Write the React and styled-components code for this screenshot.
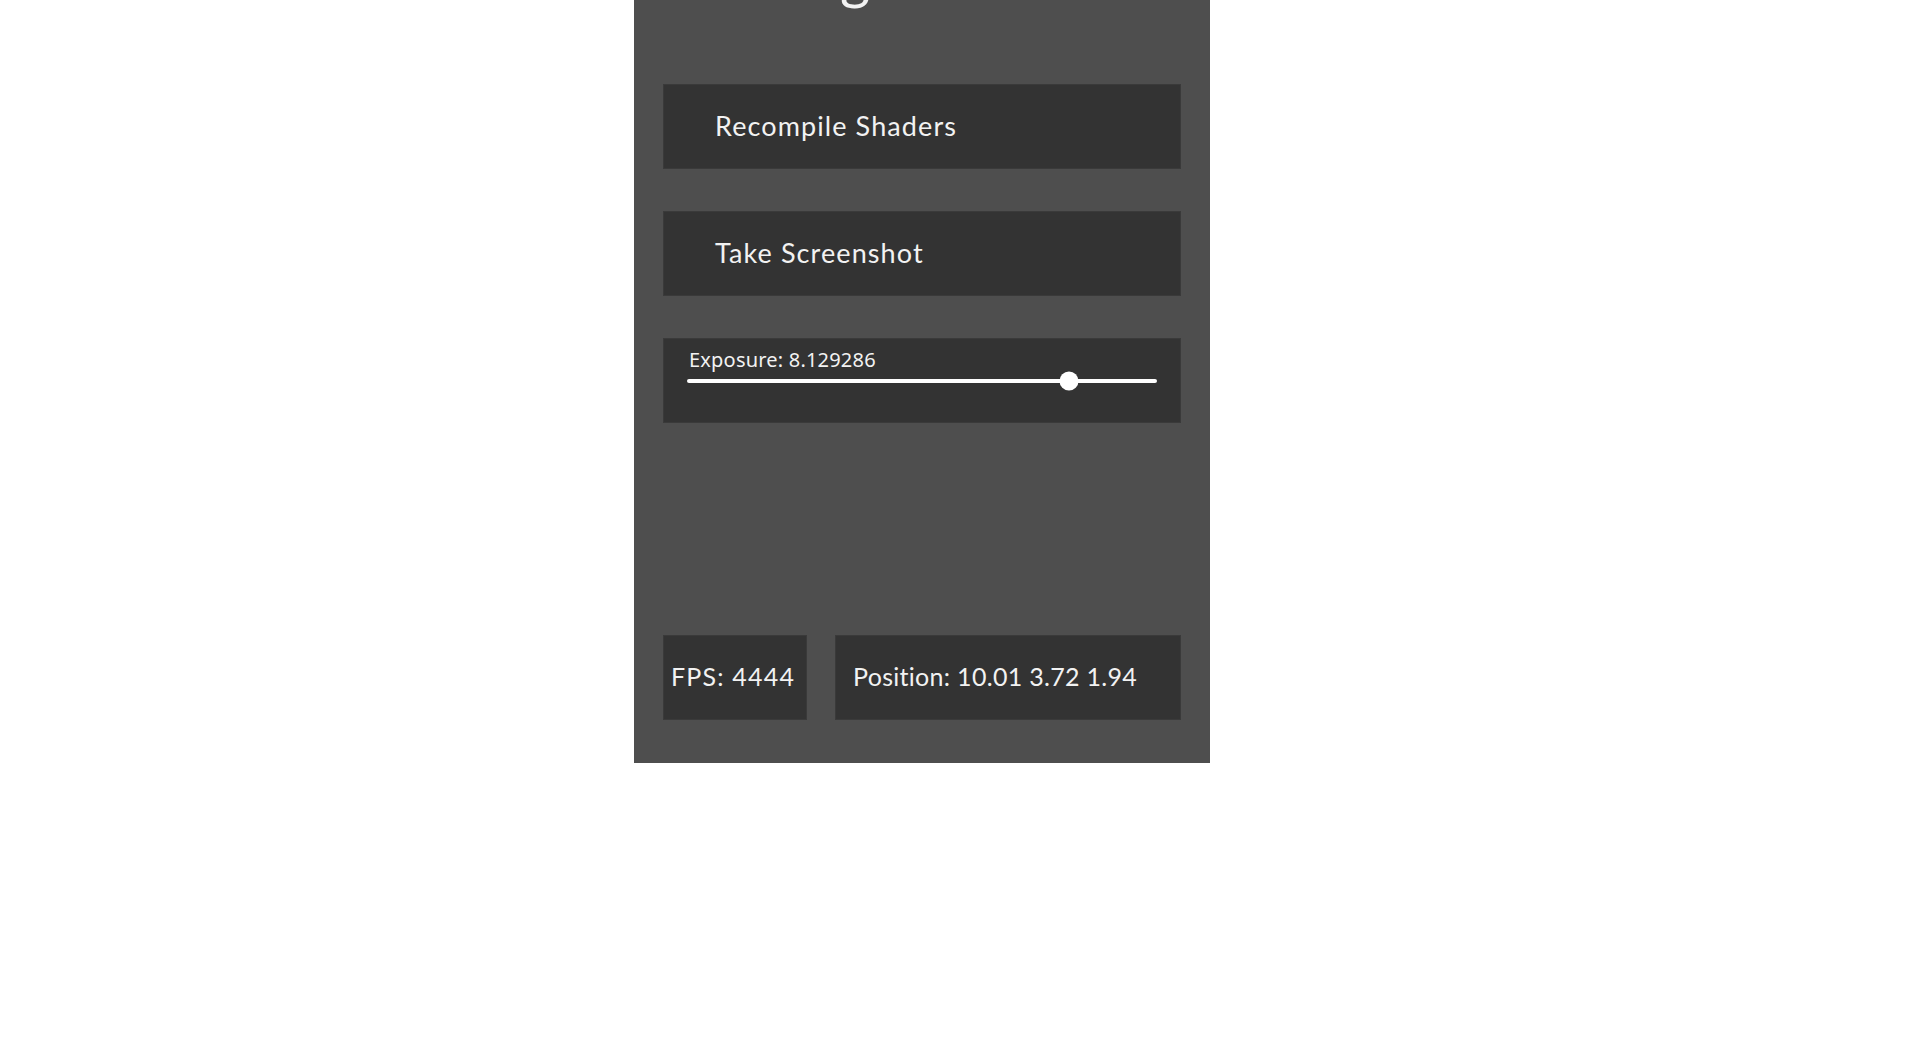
import React from "react";
import styled, { createGlobalStyle } from "styled-components";

const GlobalStyle = createGlobalStyle`
  html, body {
    margin: 0;
    padding: 0;
    background: #ffffff;
    font-family: Lato, "Noto Sans", sans-serif;
  }
`;

const Panel = styled.div`
  display: flex;
  flex-direction: column;
  box-sizing: border-box;
  width: 576px;
  height: 815px;
  margin: -52px 0 0 634px;
  padding: 0 29px 43px;
  background: #4e4e4e;
  color: #f2f2f2;
`;

const Title = styled.h1`
  margin: 0 0 80px 29px;
  font-size: 58px;
  line-height: 56px;
  font-weight: 400;
`;

const Button = styled.button`
  display: flex;
  align-items: center;
  box-sizing: border-box;
  height: 85px;
  margin-bottom: 42px;
  padding: 0 0 3px 51px;
  border: 1px solid #3a3a3a;
  background: #333333;
  color: #f2f2f2;
  font-family: Lato, "Noto Sans", sans-serif;
  font-size: 27px;
  letter-spacing: 1.1px;
  text-align: left;
  cursor: pointer;
`;

const SliderBox = styled.div`
  box-sizing: border-box;
  height: 85px;
  padding: 8px 23px 0;
  border: 1px solid #3a3a3a;
  background: #333333;
`;

const SliderLabel = styled.div`
  padding-left: 2px;
  font-family: "Noto Sans", sans-serif;
  font-size: 20px;
  line-height: 26px;
  letter-spacing: 0.2px;
`;

const Track = styled.div`
  position: relative;
  height: 4px;
  margin-top: 6px;
  border-radius: 2px;
  background: #ffffff;
`;

const Knob = styled.div`
  position: absolute;
  top: 50%;
  width: 19px;
  height: 19px;
  border-radius: 50%;
  background: #ffffff;
  transform: translate(-50%, -50%);
`;

const StatusRow = styled.div`
  display: flex;
  gap: 28px;
  margin-top: auto;
`;

const StatusBox = styled.div`
  display: flex;
  align-items: center;
  box-sizing: border-box;
  height: 85px;
  width: ${({ w }) => w}px;
  padding: 0 0 3px ${({ pad }) => pad}px;
  border: 1px solid #3a3a3a;
  background: #333333;
  font-size: 25px;
  letter-spacing: ${({ spacing }) => spacing}px;
  white-space: nowrap;
`;

const Slider = ({ label, value, min, max }) => (
  <SliderBox>
    <SliderLabel>
      {label}: {value}
    </SliderLabel>
    <Track>
      <Knob style={{ left: `${((value - min) / (max - min)) * 100}%` }} />
    </Track>
  </SliderBox>
);

const App = () => (
  <>
    <GlobalStyle />
    <Panel>
      <Title>Settings</Title>
      <Button>Recompile Shaders</Button>
      <Button>Take Screenshot</Button>
      <Slider label="Exposure" value={8.129286} min={0} max={10} />
      <StatusRow>
        <StatusBox w={144} pad={7} spacing={1.2}>
          FPS: 4444
        </StatusBox>
        <StatusBox w={346} pad={17} spacing={0.3}>
          Position: 10.01 3.72 1.94
        </StatusBox>
      </StatusRow>
    </Panel>
  </>
);

export default App;
